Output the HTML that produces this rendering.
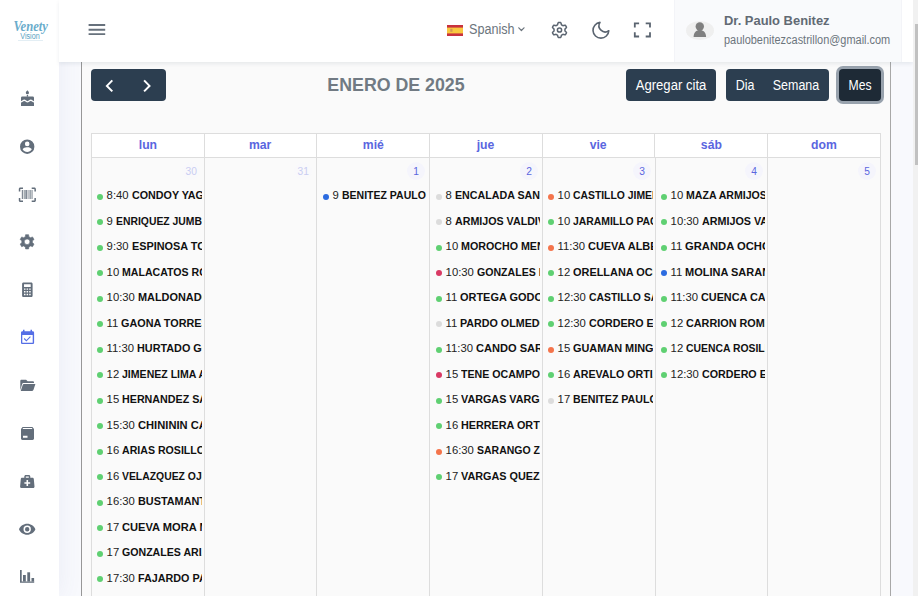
<!DOCTYPE html>
<html lang="es">
<head>
<meta charset="utf-8">
<title>Calendario</title>
<style>
*{box-sizing:border-box;margin:0;padding:0}
html,body{width:918px;height:596px;overflow:hidden}
body{font-family:"Liberation Sans",sans-serif;background:#f8f9fd;color:#495057;position:relative}
/* sidebar */
#side{position:absolute;left:0;top:0;width:59px;height:596px;background:#fff;z-index:5;box-shadow:0 0 24px 0 rgba(80,90,150,.085)}
#logo{position:absolute;left:11px;top:17px;width:38px;height:26px;text-align:center;color:#5d9cc0}
#logo .l1{position:absolute;left:-1.400px;top:1.600px;width:38px;font-family:"Liberation Serif",serif;font-style:italic;font-weight:700;font-size:15.500px;line-height:14px;color:#6aaccb;transform:scaleX(.82);transform-origin:50% 50%}
#logo .l2{position:absolute;left:-.500px;top:13.600px;width:38px;font-size:8.400px;line-height:10px;color:#5a9fc2;transform:scaleX(.86);transform-origin:50% 50%}
#logo .l3{position:absolute;left:7px;top:22.500px;width:25px;height:1px;background:#e3eef4}
/* header */
#top{position:absolute;left:59px;top:0;width:854px;height:62px;background:#fff;z-index:6;box-shadow:0 2px 4px rgba(15,34,58,.08)}
#burger{position:absolute;left:29.600px;top:24.100px;width:16.600px;height:12px}
#burger i{position:absolute;left:0;width:16.600px;height:1.850px;background:#5a6470}
#lang{position:absolute;left:388px;top:0;height:61px}
#flag{position:absolute;left:388px;top:25px;width:16px;height:11px}
#langt{position:absolute;left:409.500px;top:20.400px;font-size:14px;line-height:18px;color:#6c757d;transform:scaleX(.9);transform-origin:0 50%;white-space:nowrap}
.hic{position:absolute;top:20px;width:20px;height:20px}
.hic svg{display:block;width:20px;height:20px}
#user{position:absolute;left:615px;top:0;width:228px;height:62px;background:#f9fafc;border-left:1px solid #f3f4f8;border-right:1px solid #f3f4f8}
#ava{position:absolute;left:11px;top:21px;width:28px;height:19px;border-radius:50%;background:#efefef;overflow:hidden}
#ava svg{display:block}
#uname{position:absolute;left:48.500px;top:11.600px;font-size:13.200px;line-height:18px;font-weight:700;color:#626a74;white-space:nowrap;transform:scaleX(.98);transform-origin:0 50%}
#umail{position:absolute;left:48.500px;top:32px;font-size:12px;line-height:16px;color:#6c757d;white-space:nowrap;transform:scaleX(.912);transform-origin:0 50%}
/* scrollbar */
#sbt{position:absolute;left:913px;top:0;width:5px;height:596px;background:#f1f1f1;z-index:9}
#sbh{position:absolute;left:915px;top:24px;width:3px;height:141px;background:#c1c1c1;z-index:10}
/* card */
#card{position:absolute;left:81px;top:62px;width:810px;height:540px;background:#fafafa;border-left:1px solid #979797;border-right:1px solid #a8a8a8}
.btn{position:absolute;top:7px;height:32px;background:#2c3e50;color:#fff;border-radius:4px;font-size:14px;line-height:32px;text-align:center;white-space:nowrap}
.btn span{position:absolute;top:0;display:block;text-align:center;transform-origin:50% 50%}
.btn svg{position:absolute;left:0;top:0}
#ttl{position:absolute;left:198.700px;top:10.700px;width:230px;text-align:center;font-size:17.600px;line-height:24px;font-weight:700;color:#717a83;white-space:nowrap;transform:scaleX(1.01);transform-origin:50% 50%}
/* grid */
#grid{position:absolute;left:9px;top:71px;width:790px;height:480px;border-left:1px solid #ddd;border-top:1px solid #ddd}
.hc{position:absolute;top:0;height:24px;background:#fff;border-right:1px solid #ddd;border-bottom:1px solid #ddd;text-align:center;font-size:13.200px;line-height:22px;font-weight:700;color:#5a66df}
.hc span{display:inline-block;transform:scaleX(.925)}
.dc{position:absolute;top:24px;height:460px;border-right:1px solid #ddd;overflow:hidden}
.dn{position:absolute;right:3.800px;top:3.800px;width:18px;height:18px;border-radius:50%;background:#f5f5fc;color:#5a66df;font-size:10.200px;line-height:19px;text-align:center}
.dn.o{background:#f9f9fb;color:#c9cdf2}
.ev{position:absolute;left:0;right:2px;height:20px;overflow:hidden;white-space:nowrap;font-size:11.300px;line-height:20px;color:#222;padding-left:14.600px}
.ev b{display:inline-block;font-weight:700;color:#111;transform:scaleX(.945);transform-origin:0 50%}
.ev i{position:absolute;left:5px;top:9px;width:6px;height:6px;border-radius:50%}
.g i{background:#5fd072}.b i{background:#2b6be0}.x i{background:#dcdcdc}.r i{background:#d93a64}.o i{background:#f4744b}
</style>
</head>
<body>
<div id="side">
  <div id="logo"><div class="l1">Venety</div><div class="l2">Vision</div><div class="l3"></div></div>
<svg id="sideic" width="59" height="596" viewBox="0 0 59 596" style="position:absolute;left:0;top:0">
<g fill="#636e7b">
<!-- cake -->
<path d="M27.4 90.2c.9 1 1.6 1.7 1.6 2.5a1.6 1.6 0 0 1-3.2 0c0-.8.7-1.5 1.6-2.5z"/>
<rect x="26.8" y="94.9" width="1.3" height="1.8"/>
<path d="M22.4 96.400H32.600a1.400 1.400 0 0 1 1.400 1.400V101.200C32.800 101.200 31.950 99.600 30.750 99.600C29.550 99.600 28.700 101.200 27.500 101.200C26.300 101.200 25.450 99.600 24.250 99.600C23.050 99.600 22.200 101.200 21 101.200V97.800a1.400 1.400 0 0 1 1.400-1.400Z"/>
<path d="M21 102.600C22.200 102.600 23.050 101 24.250 101C25.450 101 26.300 102.600 27.500 102.600C28.700 102.600 29.550 101 30.750 101C31.950 101 32.800 102.600 34 102.600V105.900H21Z"/>
<!-- user circle -->
<path fill-rule="evenodd" d="M27.2 139.500a7.200 7.200 0 1 1 0 14.400 7.200 7.200 0 0 1 0-14.400zm0 2.100a2.300 2.300 0 1 0 0 4.600 2.300 2.300 0 0 0 0-4.600zm0 10.300c1.900 0 3.500-.9 4.500-2.300 0-1.500-3-2.300-4.500-2.300s-4.500.8-4.500 2.300c1 1.400 2.600 2.300 4.500 2.300z"/>
<!-- barcode scan -->
<path d="M18.800 191.400v-2.400c0-.8.700-1.500 1.500-1.500h2.700v1.400h-2.700v2.500zm17.100 0h-1.500v-2.500h-2.700v-1.400h2.700c.8 0 1.500.7 1.500 1.500zm-17.100 6.600h1.500v2.500h2.700v1.400h-2.700c-.8 0-1.500-.7-1.500-1.500zm17.100 0v2.400c0 .8-.7 1.500-1.500 1.500h-2.700v-1.400h2.700v-2.500z"/>
<g opacity=".8"><rect x="21.800" y="190" width="1.400" height="9"/><rect x="23.900" y="190" width=".8" height="9"/><rect x="25.300" y="190" width="1.800" height="9"/><rect x="27.700" y="190" width=".8" height="9"/><rect x="29.400" y="190" width="1.500" height="9" opacity=".85"/><rect x="31.300" y="190" width="1.500" height="9" opacity=".7"/></g>
<!-- gear -->
<path fill-rule="evenodd" stroke="#636e7b" stroke-width=".6" stroke-linejoin="round" d="M28.86 236.69L28.62 234.66L25.58 234.66L25.34 236.69L23.56 237.72L21.68 236.92L20.16 239.54L21.80 240.77L21.80 242.83L20.16 244.06L21.68 246.68L23.56 245.88L25.34 246.91L25.58 248.94L28.62 248.94L28.86 246.91L30.64 245.88L32.52 246.68L34.04 244.06L32.40 242.83L32.40 240.77L34.04 239.54L32.52 236.92L30.64 237.72ZM24.30 241.8a2.8 2.8 0 1 0 5.6 0a2.8 2.8 0 1 0 -5.6 0Z"/>
<!-- calculator -->
<path fill-rule="evenodd" d="M23.500 282.500h7.700c.8 0 1.400.6 1.400 1.400v11.800c0 .8-.6 1.400-1.400 1.400h-7.700c-.8 0-1.400-.6-1.400-1.400v-11.800c0-.8.600-1.400 1.400-1.400zm.5 1.700v2.900h6.700v-2.900zm0 4.200v1.400h1.500v-1.400zm2.600 0v1.400h1.500v-1.400zm2.600 0v1.400h1.500v-1.400zm-5.200 2.700v1.400h1.500v-1.400zm2.600 0v1.400h1.500v-1.400zm2.600 0v1.400h1.500v-1.400zm-5.200 2.700v1.400h1.500v-1.400zm2.600 0v1.400h1.500v-1.400zm2.600 0v1.400h1.500v-1.400z"/>
<!-- folder open -->
<path d="M21.500 379.800h4.600l1.600 1.500h5c.8 0 1.300.5 1.300 1.200v.6H23.600c-.7 0-1.300.4-1.500 1.100l-1.800 6v-9.200c0-.7.500-1.200 1.200-1.200z"/>
<path d="M23.900 384.100h11.500l-2 6c-.2.500-.6.800-1.100.8H20.700l2-6c.2-.5.600-.8 1.200-.8z"/>
<!-- box -->
<path fill-rule="evenodd" d="M22.600 427h9.800l1.600 2v9.600c0 .8-.6 1.400-1.400 1.400H22.400c-.8 0-1.400-.6-1.400-1.400V429zm.5 1.100l-.6.800h10l-.6-.8zm-.1 7.600v2h4.500v-2z"/>
<!-- medical bag -->
<path fill-rule="evenodd" d="M25.800 475h3c.8 0 1.500.7 1.500 1.500v1.300h2.200c.7 0 1.200.5 1.300 1.100l.7 7.500c.1.800-.5 1.500-1.300 1.500H21.400c-.8 0-1.400-.7-1.300-1.500l.7-7.500c.1-.6.600-1.100 1.300-1.100h2.200v-1.300c0-.8.700-1.500 1.500-1.500zm0 1.400v1.400h3v-1.400zm.7 3.700v2.100h-2.100v1.600h2.100v2.100h1.600v-2.100h2.100v-1.600h-2.100v-2.100z"/>
<!-- eye -->
<path fill-rule="evenodd" d="M27.200 523.800c3.700 0 6.900 2.300 8.200 5.500-1.300 3.200-4.500 5.500-8.200 5.500s-6.900-2.300-8.200-5.500c1.300-3.200 4.500-5.500 8.200-5.500zm0 1.800a3.700 3.700 0 1 0 0 7.400 3.700 3.700 0 0 0 0-7.400zm0 1.500a2.200 2.200 0 1 1 0 4.400 2.200 2.200 0 0 1 0-4.400z"/>
<!-- bar chart -->
<path d="M20 570h1.700v11.400h12.500v1.400H20z"/>
<rect x="23" y="575" width="2.800" height="6.600"/><rect x="27.300" y="572.300" width="2.800" height="9.300"/><rect x="31.500" y="578" width="2.600" height="3.600"/>
</g>
<!-- calendar check (active) -->
<path fill="#556ee6" fill-rule="evenodd" d="M23 329.800h1.500v1.500h6v-1.500H32v1.500h.7c.8 0 1.400.6 1.400 1.400v10c0 .8-.6 1.400-1.400 1.400H22.400c-.8 0-1.400-.6-1.400-1.400v-10c0-.8.600-1.400 1.400-1.400h.6zm-.7 5.300v7.600h10.400v-7.600zm7.700 1.200l.8.800-4.400 4.400-2.600-2.600.8-.8 1.800 1.800z"/>
</svg>

</div>
<div id="top">
  
  <svg width="854" height="61" viewBox="59 0 854 61" style="position:absolute;left:0;top:0">
<!-- menu -->
<path d="M88.600 25h16.600M88.600 29.750h16.600M88.600 34.150h16.600" stroke="#67717c" stroke-width="1.800" fill="none"/>
<!-- flag -->
<rect x="447" y="25" width="16" height="11" fill="#f9c83f"/>
<rect x="447" y="25" width="16" height="2.600" fill="#c8313e"/>
<rect x="447" y="33.400" width="16" height="2.600" fill="#c8313e"/>
<rect x="450.300" y="28.800" width="2.200" height="3" fill="#c98a5a" opacity=".8"/>
<!-- chevron -->
<path d="M518.800 27.800l2.600 2.700 2.600-2.700" fill="none" stroke="#6c757d" stroke-width="1.200" stroke-linecap="round" stroke-linejoin="round"/>
<!-- gear -->
<path d="M565.00 30.00 L564.99 29.71 L564.97 29.43 L564.93 29.14 L565.31 28.76 L565.78 28.32 L566.21 27.82 L566.50 27.31 L566.35 26.95 L566.18 26.60 L566.00 26.25 L565.79 25.92 L565.57 25.59 L565.33 25.28 L564.74 25.28 L564.10 25.40 L563.48 25.58 L562.96 25.73 L562.73 25.55 L562.50 25.39 L562.25 25.24 L562.00 25.10 L561.74 24.98 L561.47 24.87 L561.34 24.35 L561.18 23.72 L560.97 23.10 L560.67 22.59 L560.28 22.54 L559.89 22.51 L559.50 22.50 L559.11 22.51 L558.72 22.54 L558.33 22.59 L558.03 23.10 L557.82 23.72 L557.66 24.35 L557.53 24.87 L557.26 24.98 L557.00 25.10 L556.75 25.24 L556.50 25.39 L556.27 25.55 L556.04 25.73 L555.52 25.58 L554.90 25.40 L554.26 25.28 L553.67 25.28 L553.43 25.59 L553.21 25.92 L553.00 26.25 L552.82 26.60 L552.65 26.95 L552.50 27.31 L552.79 27.82 L553.22 28.32 L553.69 28.76 L554.07 29.14 L554.03 29.43 L554.01 29.71 L554.00 30.00 L554.01 30.29 L554.03 30.57 L554.07 30.86 L553.69 31.24 L553.22 31.68 L552.79 32.18 L552.50 32.69 L552.65 33.05 L552.82 33.40 L553.00 33.75 L553.21 34.08 L553.43 34.41 L553.67 34.72 L554.26 34.72 L554.90 34.60 L555.52 34.42 L556.04 34.27 L556.27 34.45 L556.50 34.61 L556.75 34.76 L557.00 34.90 L557.26 35.02 L557.53 35.13 L557.66 35.65 L557.82 36.28 L558.03 36.90 L558.33 37.41 L558.72 37.46 L559.11 37.49 L559.50 37.50 L559.89 37.49 L560.28 37.46 L560.67 37.41 L560.97 36.90 L561.18 36.28 L561.34 35.65 L561.47 35.13 L561.74 35.02 L562.00 34.90 L562.25 34.76 L562.50 34.61 L562.73 34.45 L562.96 34.27 L563.48 34.42 L564.10 34.60 L564.74 34.72 L565.33 34.72 L565.57 34.41 L565.79 34.08 L566.00 33.75 L566.18 33.40 L566.35 33.05 L566.50 32.69 L566.21 32.18 L565.78 31.68 L565.31 31.24 L564.93 30.86 L564.97 30.57 L564.99 30.29Z" fill="none" stroke="#5a6470" stroke-width="1.500" stroke-linejoin="round"/>
<circle cx="559.5" cy="30" r="2.100" fill="none" stroke="#5a6470" stroke-width="1.500"/>
<!-- moon -->
<path d="M600 22.400A7.900 7.900 0 1 0 608.800 30.700A6.160 6.160 0 0 1 600 22.400Z" fill="none" stroke="#5a6470" stroke-width="1.600" stroke-linejoin="round"/>
<!-- fullscreen -->
<path d="M634.800 27.600v-4.300h4.300M645.700 23.300h4.300v4.300M650 32.200v4.300h-4.300M639.100 36.500h-4.300v-4.300" fill="none" stroke="#5a6470" stroke-width="1.800"/>
</svg>
  <div id="langt">Spanish</div>
  <div id="user">
    <div id="ava"><svg width="28" height="19" viewBox="686 21 28 19"><circle cx="699.800" cy="26.500" r="4.200" fill="#7f7f7f"/><path d="M693.600 36.900c0-4.200 2.800-6.900 6.200-6.900s6.300 2.700 6.300 6.900z" fill="#7f7f7f"/></svg></div>
    <div id="uname">Dr. Paulo Benitez</div>
    <div id="umail">paulobenitezcastrillon@gmail.com</div>
  </div>
</div>
<div id="card">
  <div class="btn" style="left:9px;width:75px"><svg width="75" height="32" viewBox="91 69 75 32"><path d="M112.300 80.400l-5.400 5.500 5.400 5.500M144.100 80.400l5.400 5.500-5.400 5.500" fill="none" stroke="#fff" stroke-width="2"/></svg></div>
  <div id="ttl">ENERO DE 2025</div>
  <div class="btn" style="left:544px;width:90px"><span style="left:0;width:90px;transform:scaleX(.936)">Agregar cita</span></div>
  <div class="btn" style="left:644px;width:102.500px"><span style="left:1.300px;width:36px;transform:scaleX(.89)">Dia</span><span style="left:40.100px;width:60px;transform:scaleX(.89)">Semana</span></div>
  <div class="btn" id="mes" style="left:757px;width:42px;background:#1e2a36;box-shadow:0 0 0 3px #98a2ad"><span style="left:0;width:42px;transform:scaleX(.87)">Mes</span></div>
  <div id="grid">
<div class="hc" style="left:0px;width:113px"><span>lun</span></div>
<div class="hc" style="left:113px;width:112px"><span>mar</span></div>
<div class="hc" style="left:225px;width:113px"><span>mié</span></div>
<div class="hc" style="left:338px;width:113px"><span>jue</span></div>
<div class="hc" style="left:451px;width:112px"><span>vie</span></div>
<div class="hc" style="left:563px;width:113px"><span>sáb</span></div>
<div class="hc" style="left:676px;width:113px"><span>dom</span></div>
<div class="dc" style="left:0px;width:113px"><div class="dn o">30</div><div class="ev g" style="top:27px"><i></i>8:40 <b style="transform:scaleX(0.949)">CONDOY YAGUANA MARIA</b></div><div class="ev g" style="top:53px"><i style="top:8px"></i>9 <b style="transform:scaleX(0.919)">ENRIQUEZ JUMBO LUIS</b></div><div class="ev g" style="top:78px"><i></i>9:30 <b style="transform:scaleX(0.961)">ESPINOSA TORRES ANA</b></div><div class="ev g" style="top:104px"><i style="top:8px"></i>10 <b style="transform:scaleX(0.937)">MALACATOS ROJAS JOSE</b></div><div class="ev g" style="top:129px"><i></i>10:30 <b style="transform:scaleX(0.965)">MALDONADO RUIZ</b></div><div class="ev g" style="top:155px"><i style="top:8px"></i>11 <b style="transform:scaleX(0.957)">GAONA TORRES CARLOS</b></div><div class="ev g" style="top:180px"><i></i>11:30 <b style="transform:scaleX(0.959)">HURTADO GOMEZ</b></div><div class="ev g" style="top:206px"><i style="top:8px"></i>12 <b style="transform:scaleX(0.934)">JIMENEZ LIMA ANA</b></div><div class="ev g" style="top:231px"><i></i>15 <b style="transform:scaleX(0.948)">HERNANDEZ SANCHEZ</b></div><div class="ev g" style="top:257px"><i style="top:8px"></i>15:30 <b style="transform:scaleX(0.988)">CHINININ CALVA</b></div><div class="ev g" style="top:282px"><i></i>16 <b style="transform:scaleX(0.938)">ARIAS ROSILLO MARIA</b></div><div class="ev g" style="top:308px"><i style="top:8px"></i>16 <b style="transform:scaleX(0.92)">VELAZQUEZ OJEDA</b></div><div class="ev g" style="top:333px"><i></i>16:30 <b style="transform:scaleX(0.961)">BUSTAMANTE LEON</b></div><div class="ev g" style="top:359px"><i style="top:8px"></i>17 <b style="transform:scaleX(0.984)">CUEVA MORA MARIA</b></div><div class="ev g" style="top:384px"><i></i>17 <b style="transform:scaleX(0.938)">GONZALES ARIAS</b></div><div class="ev g" style="top:410px"><i style="top:8px"></i>17:30 <b style="transform:scaleX(0.954)">FAJARDO PAZ</b></div></div>
<div class="dc" style="left:113px;width:112px"><div class="dn o">31</div></div>
<div class="dc" style="left:225px;width:113px"><div class="dn">1</div><div class="ev b" style="top:27px;left:1px"><i></i>9 <b style="transform:scaleX(0.93)">BENITEZ PAULO</b></div></div>
<div class="dc" style="left:338px;width:113px"><div class="dn">2</div><div class="ev x" style="top:27px;left:1px"><i></i>8 <b style="transform:scaleX(0.945)">ENCALADA SANCHEZ</b></div><div class="ev x" style="top:53px;left:1px"><i style="top:8px"></i>8 <b style="transform:scaleX(0.945)">ARMIJOS VALDIVIESO</b></div><div class="ev g" style="top:78px;left:1px"><i></i>10 <b style="transform:scaleX(0.946)">MOROCHO MENDOZA</b></div><div class="ev r" style="top:104px;left:1px"><i style="top:8px"></i>10:30 <b style="transform:scaleX(0.936)">GONZALES MORA</b></div><div class="ev g" style="top:129px;left:1px"><i></i>11 <b style="transform:scaleX(0.969)">ORTEGA GODOY</b></div><div class="ev x" style="top:155px;left:1px"><i style="top:8px"></i>11 <b style="transform:scaleX(0.948)">PARDO OLMEDO</b></div><div class="ev g" style="top:180px;left:1px"><i></i>11:30 <b style="transform:scaleX(0.98)">CANDO SARANGO</b></div><div class="ev r" style="top:206px;left:1px"><i style="top:8px"></i>15 <b style="transform:scaleX(0.94)">TENE OCAMPO</b></div><div class="ev g" style="top:231px;left:1px"><i></i>15 <b style="transform:scaleX(0.955)">VARGAS VARGAS</b></div><div class="ev g" style="top:257px;left:1px"><i style="top:8px"></i>16 <b style="transform:scaleX(0.955)">HERRERA ORTIZ</b></div><div class="ev o" style="top:282px;left:1px"><i></i>16:30 <b style="transform:scaleX(0.929)">SARANGO ZHUNAULA</b></div><div class="ev g" style="top:308px;left:1px"><i style="top:8px"></i>17 <b style="transform:scaleX(0.959)">VARGAS QUEZADA</b></div></div>
<div class="dc" style="left:451px;width:113px"><div class="dn">3</div><div class="ev o" style="top:27px"><i></i>10 <b style="transform:scaleX(0.918)">CASTILLO JIMENEZ</b></div><div class="ev g" style="top:53px"><i style="top:8px"></i>10 <b style="transform:scaleX(0.919)">JARAMILLO PACHECO</b></div><div class="ev o" style="top:78px"><i></i>11:30 <b style="transform:scaleX(0.969)">CUEVA ALBERCA</b></div><div class="ev g" style="top:104px"><i style="top:8px"></i>12 <b style="transform:scaleX(0.967)">ORELLANA OCHOA</b></div><div class="ev g" style="top:129px"><i></i>12:30 <b style="transform:scaleX(0.919)">CASTILLO SANCHEZ</b></div><div class="ev g" style="top:155px"><i style="top:8px"></i>12:30 <b style="transform:scaleX(0.946)">CORDERO ERAS</b></div><div class="ev o" style="top:180px"><i></i>15 <b style="transform:scaleX(0.965)">GUAMAN MINGA</b></div><div class="ev g" style="top:206px"><i style="top:8px"></i>16 <b style="transform:scaleX(0.943)">AREVALO ORTIZ</b></div><div class="ev x" style="top:231px"><i></i>17 <b style="transform:scaleX(0.939)">BENITEZ PAULO</b></div></div>
<div class="dc" style="left:564px;width:112px"><div class="dn">4</div><div class="ev g" style="top:27px"><i></i>10 <b style="transform:scaleX(0.935)">MAZA ARMIJOS</b></div><div class="ev g" style="top:53px"><i style="top:8px"></i>10:30 <b style="transform:scaleX(0.951)">ARMIJOS VALDIVIESO</b></div><div class="ev g" style="top:78px"><i></i>11 <b style="transform:scaleX(0.994)">GRANDA OCHOA</b></div><div class="ev b" style="top:104px"><i style="top:8px"></i>11 <b style="transform:scaleX(0.973)">MOLINA SARANGO</b></div><div class="ev g" style="top:129px"><i></i>11:30 <b style="transform:scaleX(0.959)">CUENCA CABRERA</b></div><div class="ev g" style="top:155px"><i style="top:8px"></i>12 <b style="transform:scaleX(0.957)">CARRION ROMERO</b></div><div class="ev g" style="top:180px"><i></i>12 <b style="transform:scaleX(0.919)">CUENCA ROSILLO</b></div><div class="ev g" style="top:206px"><i style="top:8px"></i>12:30 <b style="transform:scaleX(0.947)">CORDERO ERAS</b></div></div>
<div class="dc" style="left:676px;width:113px"><div class="dn">5</div></div>
</div>
</div>
<div id="sbt"></div><div id="sbh"></div>
</body>
</html>
